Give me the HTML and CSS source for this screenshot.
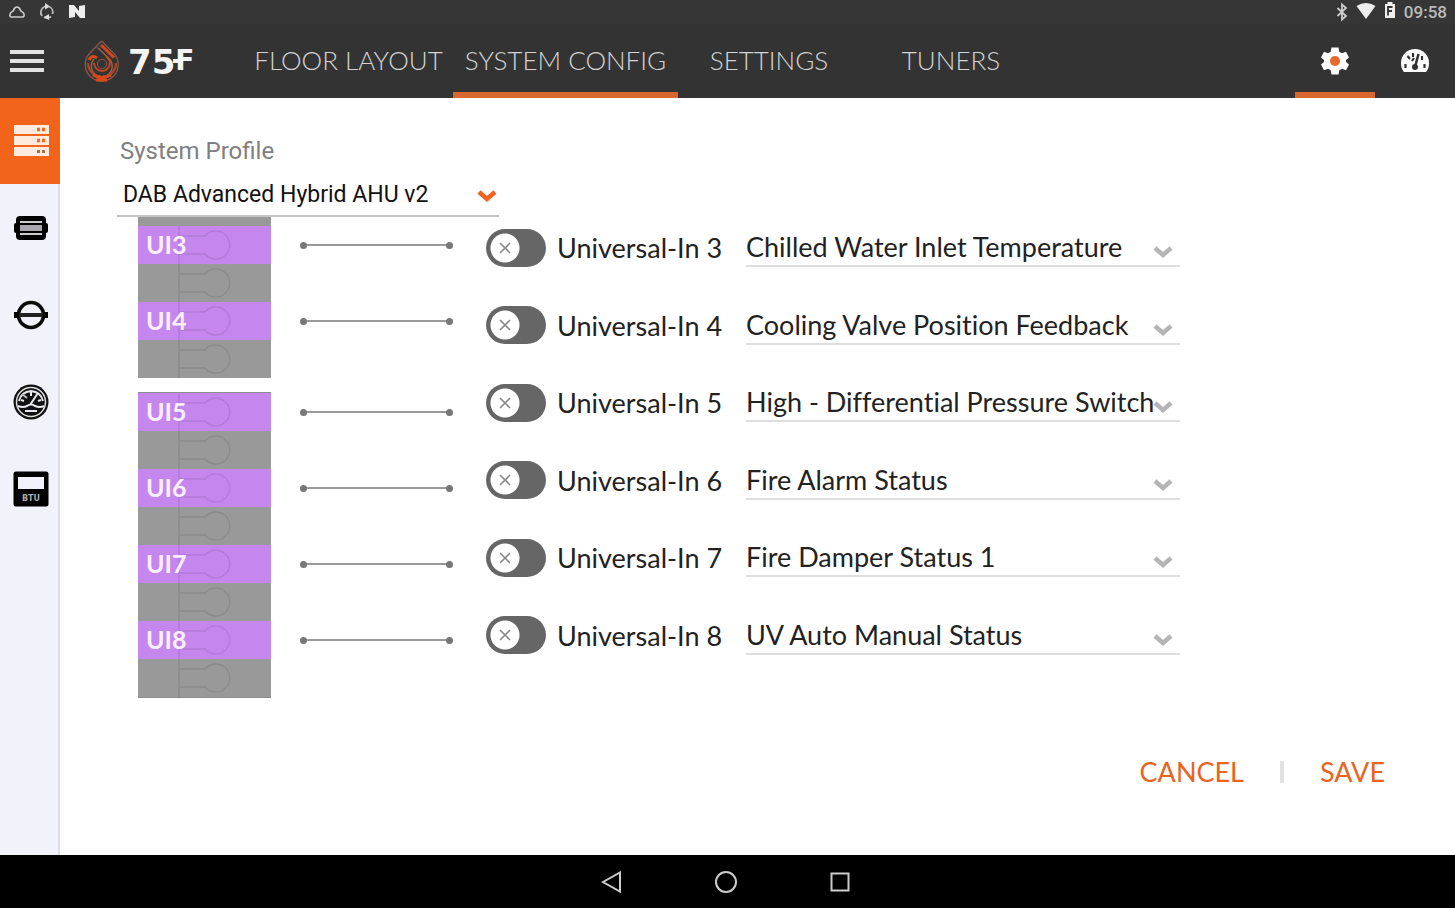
FILE: index.html
```html
<!DOCTYPE html>
<html lang="en">
<head>
<meta charset="utf-8">
<title>75F System Config</title>
<link rel="stylesheet" href="styles.css">
</head>
<body>
<svg class="defs" aria-hidden="true">
  <symbol id="slot" viewBox="0 0 133 38"><path d="M41 0V38M41 10H67A14 14 0 1 1 67 28H41" fill="none" stroke="#000" stroke-opacity=".09" stroke-width="1.5"/></symbol>
  <symbol id="chevron" viewBox="0 0 24 16"><path d="M4 4L12 11L20 4" fill="none" stroke="currentColor" stroke-width="4.5"/></symbol>
  <symbol id="cross" viewBox="0 0 12 12"><path d="M1 1L11 11M11 1L1 11" fill="none" stroke="#888" stroke-width="1.6"/></symbol>
</svg>

<div class="status">
  <div class="status-group">
    <svg width="18" height="24" viewBox="0 0 18 24"><path d="M3 17H15Q17 16 15.500 13L12.500 10.500Q11.500 7 9 7Q6.500 7 5.500 10.500L2.500 13Q1 16 3 17Z" fill="none" stroke="#ccc" stroke-width="1.600"/></svg>
    <svg width="16" height="24" viewBox="0 0 16 24"><path d="M3 16A6.200 6.200 0 0 1 6 6.500M10 6.500A6.200 6.200 0 0 1 13.500 14M12 16.500A6 6 0 0 1 5 17" fill="none" stroke="#bbb" stroke-width="1.800"/><path d="M6 3L11 6.500L6 9.500ZM10 14L5 17L10 20Z" fill="#ddd"/></svg>
    <svg width="18" height="24" viewBox="0 0 18 24"><path d="M1 5H6L11 11V6L17 5V18H12L7 12V17L1 18Z" fill="#eee"/></svg>
  </div>
  <div class="status-group status-right">
    <svg width="12" height="24" viewBox="0 0 12 24"><path d="M1.500 8L10 16L6 19.500V4.500L10 8L1.500 16" fill="none" stroke="#ccc" stroke-width="1.800"/></svg>
    <svg width="20" height="24" viewBox="0 0 20 24"><path d="M0.500 6Q10 0 19.500 6L10 19Z" fill="#eee"/></svg>
    <svg width="12" height="24" viewBox="0 0 12 24"><path d="M1 4H3.500V2H8.500V4H11V18H1Z" fill="#eee"/><path d="M4 15.500V7H8.500M4 11H8" fill="none" stroke="#333" stroke-width="1.800"/></svg>
    <span class="clock">09:58</span>
  </div>
</div>

<header class="header">
  <button class="menu" aria-label="Menu"><svg width="34" height="26" viewBox="0 0 34 26"><path d="M0 4H34M0 13H34M0 22H34" stroke="#e2e2e2" stroke-width="4"/></svg></button>
  <div class="brand">
    <svg width="36" height="44" viewBox="0 0 36 44" fill="none">
      <path d="M17.500 2L29 13.500A16.500 16.500 0 1 1 5.500 14.500L17.500 2" stroke="#85594a" stroke-width="1.300"/>
      <path d="M13.500 8.500L25.500 20A10.500 10.500 0 1 1 10 20" stroke="#9a6553" stroke-width="1.300"/>
      <path d="M17 6L30 18.500" stroke="#d8481b" stroke-width="3"/>
      <path d="M5 21Q8 15 13 19" stroke="#d8481b" stroke-width="3"/>
      <path d="M4 24A14 14 0 0 0 32 24" stroke="#b24522" stroke-width="2.200"/>
      <path d="M10 24A8 8 0 0 0 26 24Q26 21 22 17" stroke="#c5471f" stroke-width="2"/>
      <path d="M9 36Q18 41 27 36M12 41H23" stroke="#d8481b" stroke-width="3"/>
      <circle cx="18" cy="25" r="4.500" stroke="#8c5644" stroke-width="1.200"/>
    </svg>
    <span class="brand-name">75<span class="brand-unit">F</span></span>
  </div>
  <nav class="tabs">
    <a class="tab" href="#">FLOOR LAYOUT</a>
    <a class="tab tab-active" href="#">SYSTEM CONFIG</a>
    <a class="tab" href="#">SETTINGS</a>
    <a class="tab" href="#">TUNERS</a>
  </nav>
  <div class="tools">
    <button class="tool tool-active" aria-label="Configuration"><svg width="30" height="30" viewBox="0 0 30 30"><path d="M11.500 1.500H18.500L19.300 5.700L22 7.200L26 5.800L29 11.500L26 14V16L29 18.500L26 24.200L22 22.800L19.300 24.300L18.500 28.500H11.500L10.700 24.300L8 22.800L4 24.200L1 18.500L4 16V14L1 11.500L4 5.800L8 7.200L10.700 5.700Z" fill="#fff"/><circle cx="15" cy="15" r="5" fill="#e9682a"/></svg></button>
    <button class="tool" aria-label="Dashboard"><svg width="30" height="28" viewBox="0 0 30 28"><path d="M4 25Q1 22 1 16A14 14 0 0 1 29 16Q29 22 26 25Z" fill="#fff"/><path d="M18.500 7L15 20" stroke="#333" stroke-width="2.500"/><circle cx="15" cy="20" r="3" fill="#333"/><path d="M5.500 17V21M7.500 9L10 12M13 6V10M24.500 17V21M22 9V13M14 11L12 14" stroke="#333" stroke-width="2.200"/></svg></button>
  </div>
</header>

<div class="body">
  <aside class="side">
    <button class="side-item side-active" aria-label="System"><svg width="36" height="34" viewBox="0 0 36 34"><path d="M1 1H36V10H1ZM1 12H36V21H1ZM1 23H36V32H1Z" fill="#ffeadf"/><path d="M24 5.500H27M29 5.500H32M24 16.500H27M29 16.500H32" stroke="#f26a21" stroke-width="3.500"/><path d="M24 27.500H27M29 27.500H32" stroke="#b0694a" stroke-width="3"/></svg></button>
    <button class="side-item" aria-label="Equipment"><svg width="36" height="26" viewBox="0 0 36 26"><rect x="1" y="8" width="34" height="10" rx="2"/><rect x="3" y="1" width="30" height="24" rx="4"/><path d="M7 7H29M7 19H29" stroke="#ccc" stroke-width="2"/><path d="M7 13H29" stroke="#a9a6ad" stroke-width="6"/></svg></button>
    <button class="side-item" aria-label="Damper"><svg width="36" height="30" viewBox="0 0 36 30"><circle cx="18" cy="15" r="12.500" fill="none" stroke="#0a0a0a" stroke-width="3.600"/><path d="M3 15H33" stroke="#222" stroke-width="4"/><path d="M1 12H6V18H1ZM30 12H35V18H30Z"/></svg></button>
    <button class="side-item" aria-label="Gauge"><svg width="36" height="36" viewBox="0 0 36 36"><circle cx="18" cy="18" r="17.500" fill="#111"/><circle cx="18" cy="18" r="14.500" fill="none" stroke="#ddd" stroke-width="1.500"/><path d="M5 22Q10 24 14 22Q18 19 22 22Q27 24 31 22M6 17Q8 8 18 7Q28 8 30 17M17 21L25 9M12 27H24M18 7V12M8 16L11 17M28 16L25 17" fill="none" stroke="#e8e8ee" stroke-width="2"/><path d="M9 10L14 14" stroke="#bbb" stroke-width="2"/></svg></button>
    <button class="side-item" aria-label="BTU meter"><svg width="36" height="36" viewBox="0 0 36 36"><rect x=".5" y=".5" width="35" height="35" rx="2.500"/><rect x="5" y="6" width="26" height="12" fill="#f2f2fa"/><text class="btu" x="18" y="30" text-anchor="middle">BTU</text></svg></button>
  </aside>

  <main class="main">
    <label class="profile-label" for="profile">System Profile</label>
    <div class="profile">
      <select id="profile" class="profile-select"><option>DAB Advanced Hybrid AHU v2</option></select>
      <svg class="profile-chevron" width="24" height="16"><use href="#chevron"/></svg>
    </div>

    <div class="config">
      <div class="ports">
        <div class="strip strip-cut">
          <div class="port port-cut"></div>
          <div class="port port-on"><svg class="slot"><use href="#slot"/></svg><span class="port-name">UI3</span><span class="wire"></span></div>
          <div class="port"><svg class="slot"><use href="#slot"/></svg></div>
          <div class="port port-on"><svg class="slot"><use href="#slot"/></svg><span class="port-name">UI4</span><span class="wire"></span></div>
          <div class="port"><svg class="slot"><use href="#slot"/></svg></div>
        </div>
        <div class="strip">
          <div class="port port-on"><svg class="slot"><use href="#slot"/></svg><span class="port-name">UI5</span><span class="wire"></span></div>
          <div class="port"><svg class="slot"><use href="#slot"/></svg></div>
          <div class="port port-on"><svg class="slot"><use href="#slot"/></svg><span class="port-name">UI6</span><span class="wire"></span></div>
          <div class="port"><svg class="slot"><use href="#slot"/></svg></div>
          <div class="port port-on"><svg class="slot"><use href="#slot"/></svg><span class="port-name">UI7</span><span class="wire"></span></div>
          <div class="port"><svg class="slot"><use href="#slot"/></svg></div>
          <div class="port port-on"><svg class="slot"><use href="#slot"/></svg><span class="port-name">UI8</span><span class="wire"></span></div>
          <div class="port"><svg class="slot"><use href="#slot"/></svg></div>
        </div>
      </div>

      <div class="inputs">
        <div class="row"><span class="toggle"><input type="checkbox" id="u3"><svg class="cross"><use href="#cross"/></svg></span><label class="row-label" for="u3">Universal-In 3</label><div class="field"><select aria-label="Universal-In 3 sensor"><option>Chilled Water Inlet Temperature</option></select><svg class="chevron"><use href="#chevron"/></svg></div></div>
        <div class="row"><span class="toggle"><input type="checkbox" id="u4"><svg class="cross"><use href="#cross"/></svg></span><label class="row-label" for="u4">Universal-In 4</label><div class="field"><select aria-label="Universal-In 4 sensor"><option>Cooling Valve Position Feedback</option></select><svg class="chevron"><use href="#chevron"/></svg></div></div>
        <div class="row"><span class="toggle"><input type="checkbox" id="u5"><svg class="cross"><use href="#cross"/></svg></span><label class="row-label" for="u5">Universal-In 5</label><div class="field"><select aria-label="Universal-In 5 sensor"><option>High - Differential Pressure Switch</option></select><svg class="chevron"><use href="#chevron"/></svg></div></div>
        <div class="row"><span class="toggle"><input type="checkbox" id="u6"><svg class="cross"><use href="#cross"/></svg></span><label class="row-label" for="u6">Universal-In 6</label><div class="field"><select aria-label="Universal-In 6 sensor"><option>Fire Alarm Status</option></select><svg class="chevron"><use href="#chevron"/></svg></div></div>
        <div class="row"><span class="toggle"><input type="checkbox" id="u7"><svg class="cross"><use href="#cross"/></svg></span><label class="row-label" for="u7">Universal-In 7</label><div class="field"><select aria-label="Universal-In 7 sensor"><option>Fire Damper Status 1</option></select><svg class="chevron"><use href="#chevron"/></svg></div></div>
        <div class="row"><span class="toggle"><input type="checkbox" id="u8"><svg class="cross"><use href="#cross"/></svg></span><label class="row-label" for="u8">Universal-In 8</label><div class="field"><select aria-label="Universal-In 8 sensor"><option>UV Auto Manual Status</option></select><svg class="chevron"><use href="#chevron"/></svg></div></div>
      </div>
    </div>

    <div class="actions">
      <button class="action">CANCEL</button>
      <span class="divider"></span>
      <button class="action">SAVE</button>
    </div>
  </main>
</div>

<footer class="navbar">
  <button class="nav-key" aria-label="Back"><svg width="24" height="24" viewBox="0 0 24 24"><path d="M3 12L20 2.500V21.500Z" fill="none" stroke="#ccc" stroke-width="2"/></svg></button>
  <button class="nav-key" aria-label="Home"><svg width="24" height="24" viewBox="0 0 24 24"><circle cx="12" cy="12" r="10" fill="none" stroke="#ccc" stroke-width="2"/></svg></button>
  <button class="nav-key" aria-label="Recents"><svg width="24" height="24" viewBox="0 0 24 24"><rect x="3.500" y="3.500" width="17" height="17" fill="none" stroke="#ccc" stroke-width="2"/></svg></button>
</footer>
</body>
</html>
```

FILE: styles.css
```css
* { box-sizing: border-box; }
body {
  margin: 0;
  min-height: 100vh;
  display: flex;
  flex-direction: column;
  background: #fff;
  color: #222;
  font-family: Lato, sans-serif;
  font-variant-ligatures: none;
}
button { border: 0; padding: 0; background: none; font: inherit; color: inherit; }
svg { display: block; flex: none; }
.defs { position: absolute; width: 0; height: 0; }

.status {
  display: flex;
  justify-content: space-between;
  height: 24px;
  padding: 0 8px;
  background: #363636;
}
.status-group { display: flex; align-items: center; gap: 13px; }
.status-right { gap: 8px; }
.clock { font: 500 17px/24px Roboto, sans-serif; color: #bbb; }

.header { display: flex; height: 74px; background: #333; }
.menu { padding: 0 10px; }
.brand { display: flex; align-items: center; gap: 8px; width: 190px; padding-left: 30px; }
.brand-name { font: bold 34px/40px "DejaVu Sans", sans-serif; color: #f4f4f4; }
.brand-unit { position: relative; font-size: 28px; vertical-align: 4px; }
.brand-unit::after {
  content: "";
  position: absolute;
  left: -2px;
  top: 15px;
  width: 10px;
  height: 4px;
  background: #f4f4f4;
}
.tabs { display: flex; flex: 1; }
.tab {
  display: flex;
  align-items: center;
  justify-content: center;
  width: 182px;
  padding-top: 4px;
  border-bottom: 6px solid transparent;
  color: #d4d4d4;
  font-size: 26px;
  font-weight: 300;
  text-decoration: none;
  white-space: nowrap;
}
.tab:first-child { width: 209px; }
.tab-active { width: 225px; border-bottom-color: #d9682f; }
.tools { display: flex; }
.tool {
  display: flex;
  align-items: center;
  justify-content: center;
  width: 80px;
  padding-top: 5px;
  border-bottom: 6px solid transparent;
}
.tool-active { border-bottom-color: #d9682f; }

.body { display: flex; flex: 1; }
.side { width: 60px; background: #f2f2fa; border-right: 2px solid #dfdfe5; }
.side-item {
  display: flex;
  align-items: center;
  width: 60px;
  height: 86px;
  padding-left: 13px;
}
.side-item + .side-item { height: 87px; }
.side-active { background: #f26419; }
.btu { font: bold 8px "DejaVu Sans", sans-serif; fill: #aaa; }

.main { flex: 1; padding: 39px 70px 0 57px; }
.profile-label {
  display: block;
  padding-left: 3px;
  color: #808080;
  font: 24px/28px Roboto, sans-serif;
}
.profile {
  position: relative;
  width: 382px;
  margin-top: 9px;
  border-bottom: 2px solid #c4c4c4;
}
select {
  display: block;
  appearance: none;
  width: 100%;
  padding: 0;
  border: 0;
  background: none;
  color: #222;
  font-variant-ligatures: none;
}
.profile .profile-select { height: 41px; padding-left: 6px; color: #111; font: 23px/28px Roboto, sans-serif; }
.profile-chevron { position: absolute; right: 0; top: 14px; color: #ee6420; pointer-events: none; }

.config { display: flex; padding: 0 205px 0 21px; }
.ports { display: flex; flex-direction: column; gap: 14px; width: 348px; }
.strip { width: 133px; background: #999; border: solid #8c8c8c; border-width: 1px 0; }
.strip-cut { border-width: 0; }
.port { position: relative; display: flex; align-items: center; height: 38px; }
.port-cut { height: 9px; }
.port-on { background: #c586ee; }
.slot { position: absolute; left: 0; top: 0; width: 133px; height: 38px; }
.port-name { position: relative; width: 162px; flex: none; padding: 0 0 2px 8px; color: #fbeeff; font-size: 25px; font-weight: 700; line-height: 30px; }
.wire {
  display: flex;
  align-items: center;
  justify-content: space-between;
  flex: none;
  width: 153px;
  background: linear-gradient(#999, #999) center / 146px 2px no-repeat;
}
.wire::before, .wire::after { content: ""; width: 7px; height: 7px; border-radius: 50%; background: #777; }

.inputs {
  display: flex;
  flex: 1;
  flex-direction: column;
  justify-content: space-between;
  padding: 11px 0 43px;
}
.row { display: flex; align-items: center; height: 39px; }
.toggle { position: relative; flex: none; width: 60px; height: 38px; }
.toggle input {
  appearance: none;
  display: block;
  width: 60px;
  height: 38px;
  margin: 0;
  border-radius: 19px;
  background: radial-gradient(circle at 19px 19px, #fff 14px, #666 15px);
}
.cross { position: absolute; left: 13px; top: 13px; width: 12px; height: 12px; pointer-events: none; }
.row-label { flex: none; width: 200px; padding-left: 11px; font-size: 27px; line-height: 37px; white-space: nowrap; }
.field { position: relative; flex: 1; border-bottom: 2px solid #dedede; }
.field select { height: 37px; font: 27px/37px Lato, sans-serif; font-variant-ligatures: none; }
.chevron { position: absolute; right: 4px; top: 16px; width: 26px; height: 16px; color: #b5b5b5; pointer-events: none; }

.actions { display: flex; align-items: center; justify-content: flex-end; gap: 36px; margin-top: 56px; }
.action { color: #ea6420; font-size: 27px; line-height: 36px; }
.divider { width: 4px; height: 22px; background: #e2e2e2; }

.navbar { display: flex; justify-content: center; gap: 90px; height: 53px; padding-right: 4px; background: #000; }
.nav-key { display: flex; align-items: center; }
```
